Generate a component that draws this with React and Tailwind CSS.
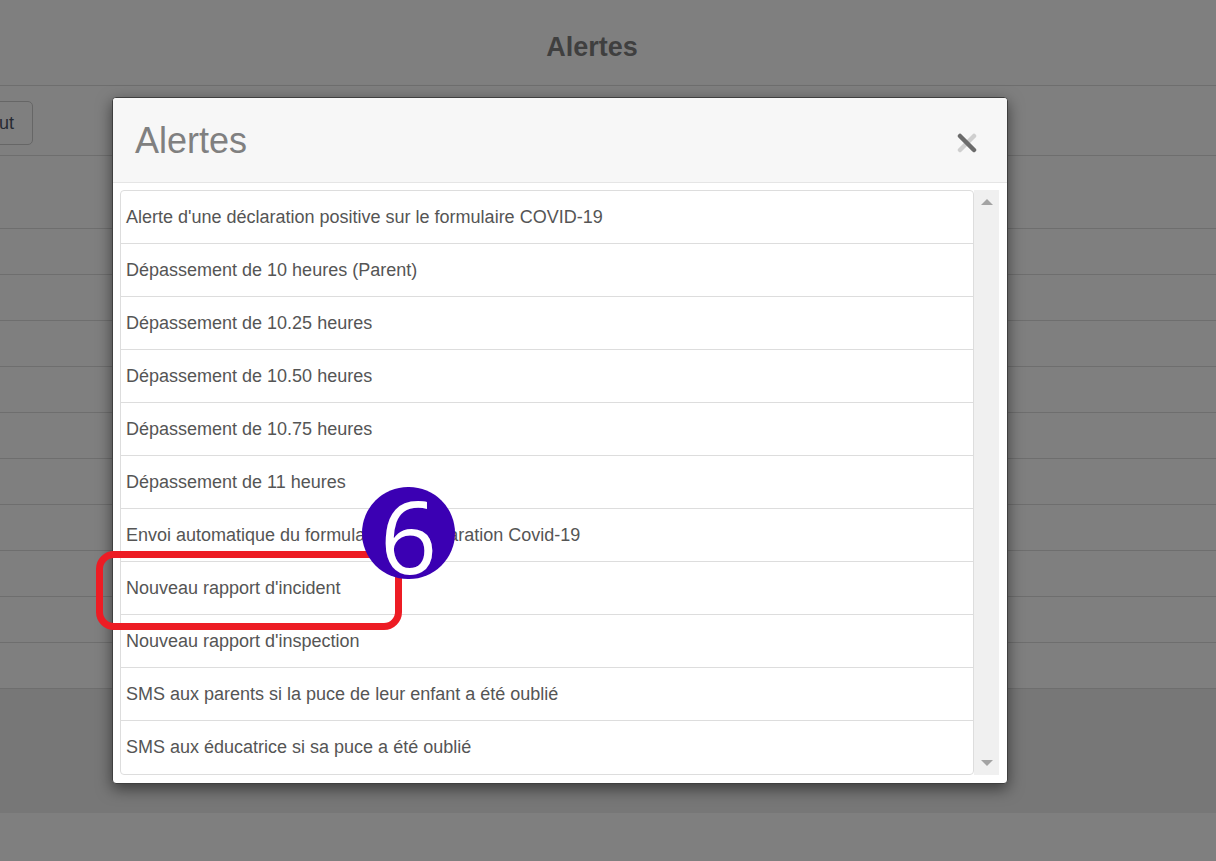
import React from "react";

const items = [
  "Alerte d'une déclaration positive sur le formulaire COVID-19",
  "Dépassement de 10 heures (Parent)",
  "Dépassement de 10.25 heures",
  "Dépassement de 10.50 heures",
  "Dépassement de 10.75 heures",
  "Dépassement de 11 heures",
  "Envoi automatique du formulaire de déclaration Covid-19",
  "Nouveau rapport d'incident",
  "Nouveau rapport d'inspection",
  "SMS aux parents si la puce de leur enfant a été oublié",
  "SMS aux éducatrice si sa puce a été oublié",
];

export default function App() {
  return (
    <div
      className="relative w-[1216px] h-[861px] overflow-hidden bg-[#7f7f7f]"
      style={{ fontFamily: '"Liberation Sans", Arial, sans-serif' }}
    >
      {/* Background page (dimmed) */}
      <div className="h-[86px] flex items-center justify-center pr-[32px] border-b border-[#6e6e6e]">
        <span className="text-[27px] font-bold text-[#3f3f3f] mt-[9px]">Alertes</span>
      </div>
      <div className="h-[70px] border-b border-[#6e6e6e] pt-[15px]">
        <div className="ml-[-44px] w-[77px] h-[44px] rounded-[5px] border border-[#666] flex items-center justify-end pr-[18px] text-[18px] text-[#262a33]">
          Ajout
        </div>
      </div>
      <div className="h-[73px] border-b border-[#6e6e6e]" />
      {Array.from({ length: 10 }).map((_, i) => (
        <div key={i} className="h-[46px] border-b border-[#6e6e6e]" />
      ))}
      <div className="h-[124px] bg-[#777777]" />

      {/* Modal */}
      <div className="absolute left-[112px] top-[97px] w-[896px] bg-white border border-[#3f3f3f] rounded-[4px] shadow-[0_5px_15px_rgba(0,0,0,0.5)] overflow-hidden">
        <div className="h-[85px] bg-[#f7f7f7] border-b border-[#e5e5e5] flex items-center justify-between pl-[22px] pr-[30px]">
          <span className="text-[36px] text-[#808080] leading-none mt-[1px]">Alertes</span>
          <svg width="20" height="20" viewBox="0 0 20 20" className="mt-[6px]">
            <line x1="3" y1="17" x2="17" y2="3" stroke="#cfcfcf" strokeWidth="4.5" strokeLinecap="round" />
            <line x1="3" y1="3" x2="17" y2="17" stroke="#6b6b6b" strokeWidth="4.5" strokeLinecap="round" />
          </svg>
        </div>
        <div className="flex pl-[7px] pr-[8px] pt-[7px] pb-[8px]">
          <div className="flex-1 border border-[#dddddd] rounded-[4px]">
            {items.map((t, i) => (
              <div
                key={i}
                className={
                  "h-[53px] flex items-center pl-[5px] text-[18px] text-[#555555] " +
                  (i < items.length - 1 ? "border-b border-[#dddddd]" : "")
                }
              >
                {t}
              </div>
            ))}
          </div>
          <div className="w-[25px] bg-[#f0f0f0] flex flex-col items-center justify-between pt-[9px] pb-[9px]">
            <div className="w-0 h-0 border-l-[6px] border-r-[6px] border-l-transparent border-r-transparent border-b-[6px] border-b-[#a3a3a3]" />
            <div className="w-0 h-0 border-l-[6px] border-r-[6px] border-l-transparent border-r-transparent border-t-[6px] border-t-[#a3a3a3]" />
          </div>
        </div>
      </div>

      {/* Annotations */}
      <div className="absolute left-[96px] top-[551px] w-[306px] h-[79px] border-[7px] border-[#ed1c24] rounded-[18px]" />
      <div
        className="absolute left-[362px] top-[487px] w-[93px] h-[92px] rounded-full bg-[#3b00b3] flex items-center justify-center text-white text-[100px] leading-none"
        style={{ fontFamily: '"Open Sans", "Noto Sans", sans-serif', fontWeight: 400 }}
      >
        <span className="mt-[4px]">6</span>
      </div>
    </div>
  );
}
